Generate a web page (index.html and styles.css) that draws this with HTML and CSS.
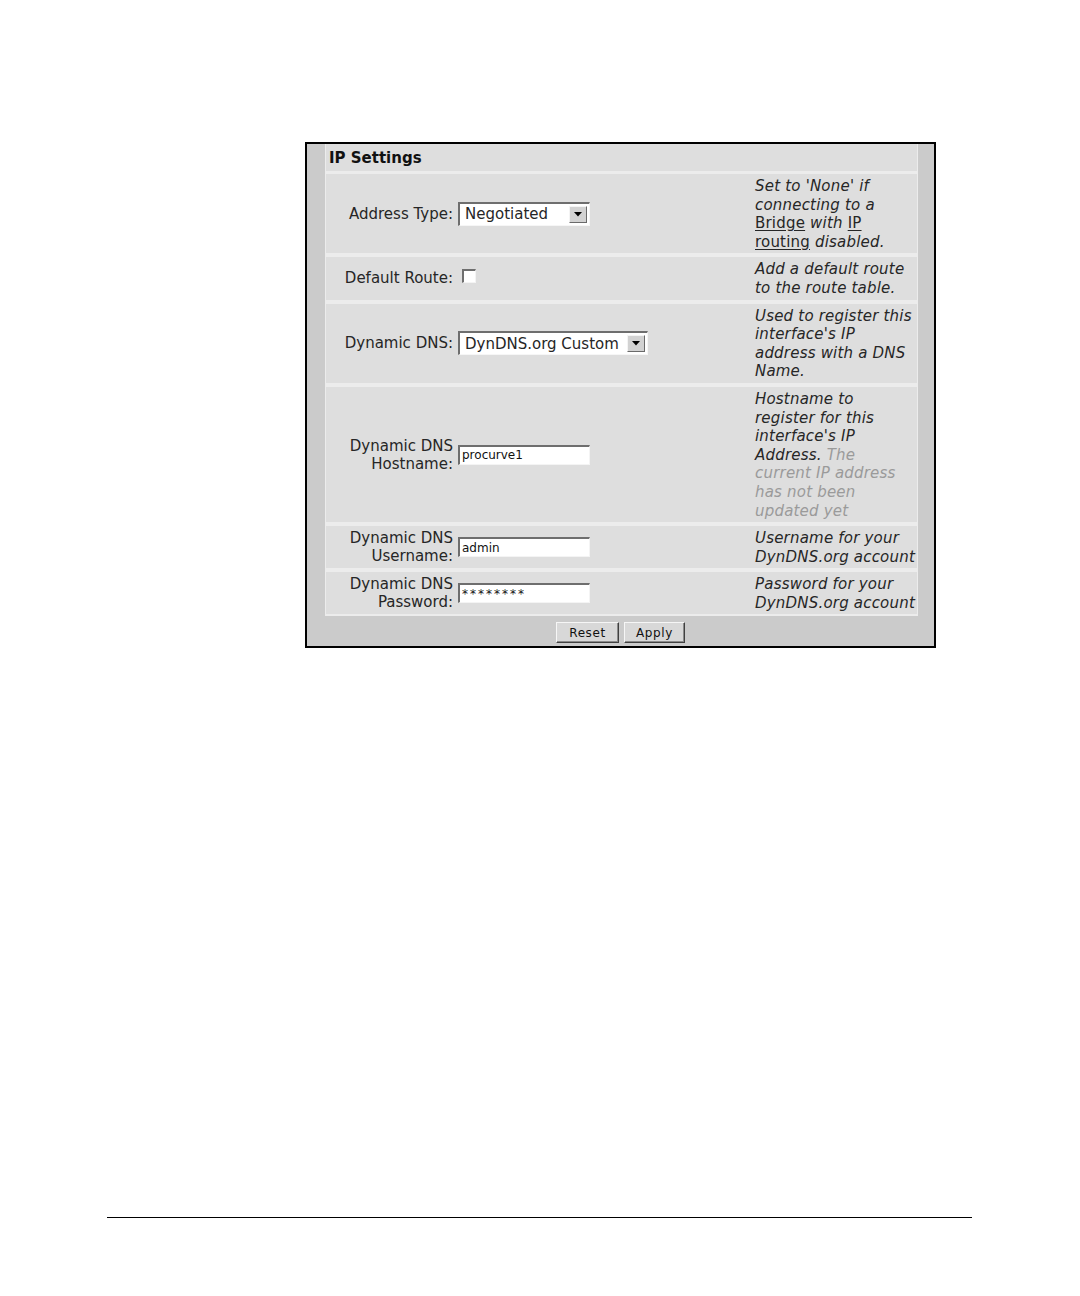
FILE: index.html
```html
<!DOCTYPE html>
<html>
<head>
<meta charset="utf-8">
<link rel="stylesheet" href="styles.css">
</head>
<body>
<div class="page">
  <div class="panel">
    <div class="rows">
      <div class="head">IP Settings</div>

      <div class="row">
        <div class="label">Address Type:</div>
        <div class="control">
          <div class="select w132"><span class="val">Negotiated</span><span class="arrow"><svg width="8" height="5" viewBox="0 0 8 5"><path d="M0 0H8L4 4.5Z" fill="#000"/></svg></span></div>
        </div>
        <div class="help">Set to 'None' if<br>connecting to a<br><a>Bridge</a> with <a>IP</a><br><a>routing</a> disabled.</div>
      </div>

      <div class="row">
        <div class="label">Default Route:</div>
        <div class="control"><input class="check" type="checkbox"></div>
        <div class="help">Add a default route<br>to the route table.</div>
      </div>

      <div class="row">
        <div class="label">Dynamic DNS:</div>
        <div class="control">
          <div class="select w190"><span class="val">DynDNS.org Custom</span><span class="arrow"><svg width="8" height="5" viewBox="0 0 8 5"><path d="M0 0H8L4 4.5Z" fill="#000"/></svg></span></div>
        </div>
        <div class="help">Used to register this<br>interface's IP<br>address with a DNS<br>Name.</div>
      </div>

      <div class="row">
        <div class="label">Dynamic DNS<br>Hostname:</div>
        <div class="control"><input class="text" type="text" value="procurve1"></div>
        <div class="help">Hostname to<br>register for this<br>interface's IP<br>Address. <span class="dim">The<br>current IP address<br>has not been<br>updated yet</span></div>
      </div>

      <div class="row">
        <div class="label">Dynamic DNS<br>Username:</div>
        <div class="control"><input class="text" type="text" value="admin"></div>
        <div class="help">Username for your<br>DynDNS.org account</div>
      </div>

      <div class="row">
        <div class="label">Dynamic DNS<br>Password:</div>
        <div class="control"><input class="text pass" type="text" value="********"></div>
        <div class="help">Password for your<br>DynDNS.org account</div>
      </div>
    </div>
    <div class="buttons">
      <button class="btn reset">Reset</button>
      <button class="btn apply">Apply</button>
    </div>
  </div>
  <div class="rule"></div>
</div>
</body>
</html>
```

FILE: styles.css
```css
html, body {
  margin: 0;
  padding: 0;
  background: #ffffff;
}

body {
  font-family: "DejaVu Sans", Verdana, sans-serif;
  color: #262626;
}

.page {
  display: flex;
  flex-direction: column;
  padding-top: 142px;
  width: 1080px;
  height: 1296px;
  box-sizing: border-box;
}

.panel {
  margin-left: 305px;
  width: 631px;
  box-sizing: border-box;
  border: 2px solid #000;
  background: #cbcbcb;
  display: flex;
  flex-direction: column;
}

.rows {
  margin-left: 18px;
  margin-right: 16px;
  padding: 0 1px 2px 1px;
  background: #ececec;
  display: flex;
  flex-direction: column;
  gap: 4px;
}

.head {
  height: 27px;
  box-sizing: border-box;
  margin-bottom: -1px;
  background: #dedede;
  font-weight: bold;
  font-size: 15px;
  line-height: 21px;
  padding: 4px 0 0 3px;
  color: #111;
}

.row {
  display: grid;
  grid-template-columns: 128px 293px 162px;
  column-gap: 4px;
  background: #dedede;
  font-size: 15px;
}

.label {
  align-self: center;
  text-align: right;
  line-height: 18px;
  padding-right: 1px;
  white-space: nowrap;
}

.control {
  align-self: center;
  display: flex;
  align-items: center;
}

.help {
  font-style: italic;
  line-height: 18.6px;
  padding: 3px 0 2px;
  letter-spacing: 0.2px;
  white-space: nowrap;
}

.help a {
  font-style: normal;
  text-decoration: underline;
  text-underline-offset: 2px;
}

.help .dim {
  color: #9a9a9a;
}

.select {
  display: flex;
  align-items: center;
  height: 24px;
  box-sizing: border-box;
  background: #fff;
  border-top: 2px solid #6e6e6e;
  border-left: 2px solid #6e6e6e;
  border-right: 1px solid #f6f6f6;
  border-bottom: 1px solid #f6f6f6;
  padding-left: 5px;
  font-size: 15px;
}

.w132 { width: 132px; }
.w190 { width: 190px; }

.select .val {
  flex: 1;
  white-space: nowrap;
}

.select .arrow {
  width: 18px;
  height: 17px;
  margin-right: 2px;
  box-sizing: border-box;
  background: #d2d2d2;
  border: 1px solid;
  border-color: #f4f4f4 #6a6a6a #6a6a6a #f4f4f4;
  display: flex;
  align-items: center;
  justify-content: center;
}

.check {
  appearance: none;
  -webkit-appearance: none;
  margin: 0 0 0 4px;
  width: 14px;
  height: 14px;
  box-sizing: border-box;
  background: #fff;
  border-top: 2px solid #6e6e6e;
  border-left: 2px solid #6e6e6e;
  border-right: 1px solid #f4f4f4;
  border-bottom: 1px solid #f4f4f4;
  position: relative;
  top: -2px;
}

.text {
  width: 132px;
  height: 20px;
  box-sizing: border-box;
  margin: 0;
  padding: 0 2px;
  background: #fff;
  border-top: 2px solid #6e6e6e;
  border-left: 2px solid #6e6e6e;
  border-right: 1px solid #f4f4f4;
  border-bottom: 1px solid #f4f4f4;
  font-family: "DejaVu Sans", Verdana, sans-serif;
  font-size: 12px;
  color: #111;
  outline: none;
}

.text.pass {
  letter-spacing: 2px;
}

.buttons {
  display: flex;
  justify-content: center;
  gap: 5px;
  padding: 6px 0 3px;
}

.btn {
  height: 21px;
  box-sizing: border-box;
  margin: 0;
  padding: 0;
  background: #d8d8d8;
  border: 1px solid;
  border-color: #f6f6f6 #404040 #404040 #f6f6f6;
  box-shadow: inset -1px -1px 0 #8a8a8a;
  font-family: "DejaVu Sans", Verdana, sans-serif;
  font-size: 12px;
  letter-spacing: 0.6px;
  color: #111;
}

.reset { width: 63px; }
.apply { width: 61px; }

.rule {
  margin-top: 569px;
  margin-left: 107px;
  width: 865px;
  height: 1px;
  background: #000;
}
```
